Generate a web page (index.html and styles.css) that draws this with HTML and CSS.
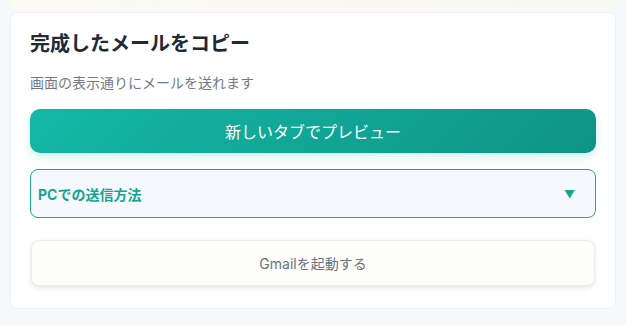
FILE: index.html
```html
<!DOCTYPE html>
<html lang="ja">
<head>
    <meta charset="UTF-8">
    <meta name="viewport" content="width=device-width, initial-scale=1.0">
    <title>完成したメールをコピー</title>
    <link rel="stylesheet" href="styles.css">
</head>
<body>

    <!-- Previous section edge -->
    <div class="top-edge"></div>

    <!-- Copy Card -->
    <div class="card">
        <h2 class="card-title">完成したメールをコピー</h2>
        <p class="card-sub">画面の表示通りにメールを送れます</p>

        <button class="btn-preview">新しいタブでプレビュー</button>

        <div class="howto">
            <span class="howto-label">PCでの送信方法</span>
            <span class="howto-arrow">▼</span>
        </div>

        <button class="btn-gmail">Gmailを起動する</button>
    </div>

</body>
</html>
```

FILE: styles.css
```css
/* Base */
body {
    background-color: #f7f8fa;
    font-family: "Inter", "Noto Sans CJK JP", sans-serif;
    margin: 0;
    padding: 0 10px;
}

.top-edge {
    height: 8px;
    background: linear-gradient(to right, #fbfaf3, #faf8ee 60%, #f9f8f2);
    margin: 0 0 4px;
}

/* Card */
.card {
    background-color: #ffffff;
    border: 1px solid #eff1f3;
    border-radius: 8px;
    padding: 16px 19px 22px;
    display: flex;
    flex-direction: column;
}

.card-title {
    font-family: "Noto Sans CJK JP", sans-serif;
    font-size: 20px;
    line-height: 28px;
    font-weight: 700;
    color: #1f2937;
    margin: 0 0 15px;
}

.card-sub {
    font-family: "Noto Sans CJK JP", sans-serif;
    font-size: 14px;
    line-height: 20px;
    color: #737a86;
    margin: 0 0 17px;
}

/* Preview button */
.btn-preview {
    height: 44px;
    border: none;
    border-radius: 10px;
    background: linear-gradient(135deg, #14b8a6, #0e9486);
    color: #ffffff;
    font-family: "Noto Sans CJK JP", sans-serif;
    font-size: 16px;
    cursor: pointer;
    box-shadow: 0 4px 10px rgba(20, 184, 166, 0.2);
    margin-bottom: 16px;
}

/* How-to dropdown */
.howto {
    height: 47px;
    border: 1px solid #21a796;
    border-radius: 8px;
    background-color: #f5f8fe;
    display: flex;
    align-items: center;
    justify-content: space-between;
    padding: 0 20px 0 7px;
    margin-bottom: 22px;
}

.howto-label {
    font-family: "Inter", "Noto Sans CJK JP", sans-serif;
    font-size: 14px;
    font-weight: 700;
    color: #14a591;
}

.howto-arrow {
    font-size: 11px;
    color: #14a591;
}

/* Gmail button */
.btn-gmail {
    height: 46px;
    margin: 0 1px;
    border: 1px solid #ececea;
    border-radius: 8px;
    background-color: #fdfdfb;
    color: #6b7280;
    font-family: "Inter", "Noto Sans CJK JP", sans-serif;
    font-size: 14px;
    cursor: pointer;
    box-shadow: 0 2px 5px rgba(0, 0, 0, 0.1);
}
```
